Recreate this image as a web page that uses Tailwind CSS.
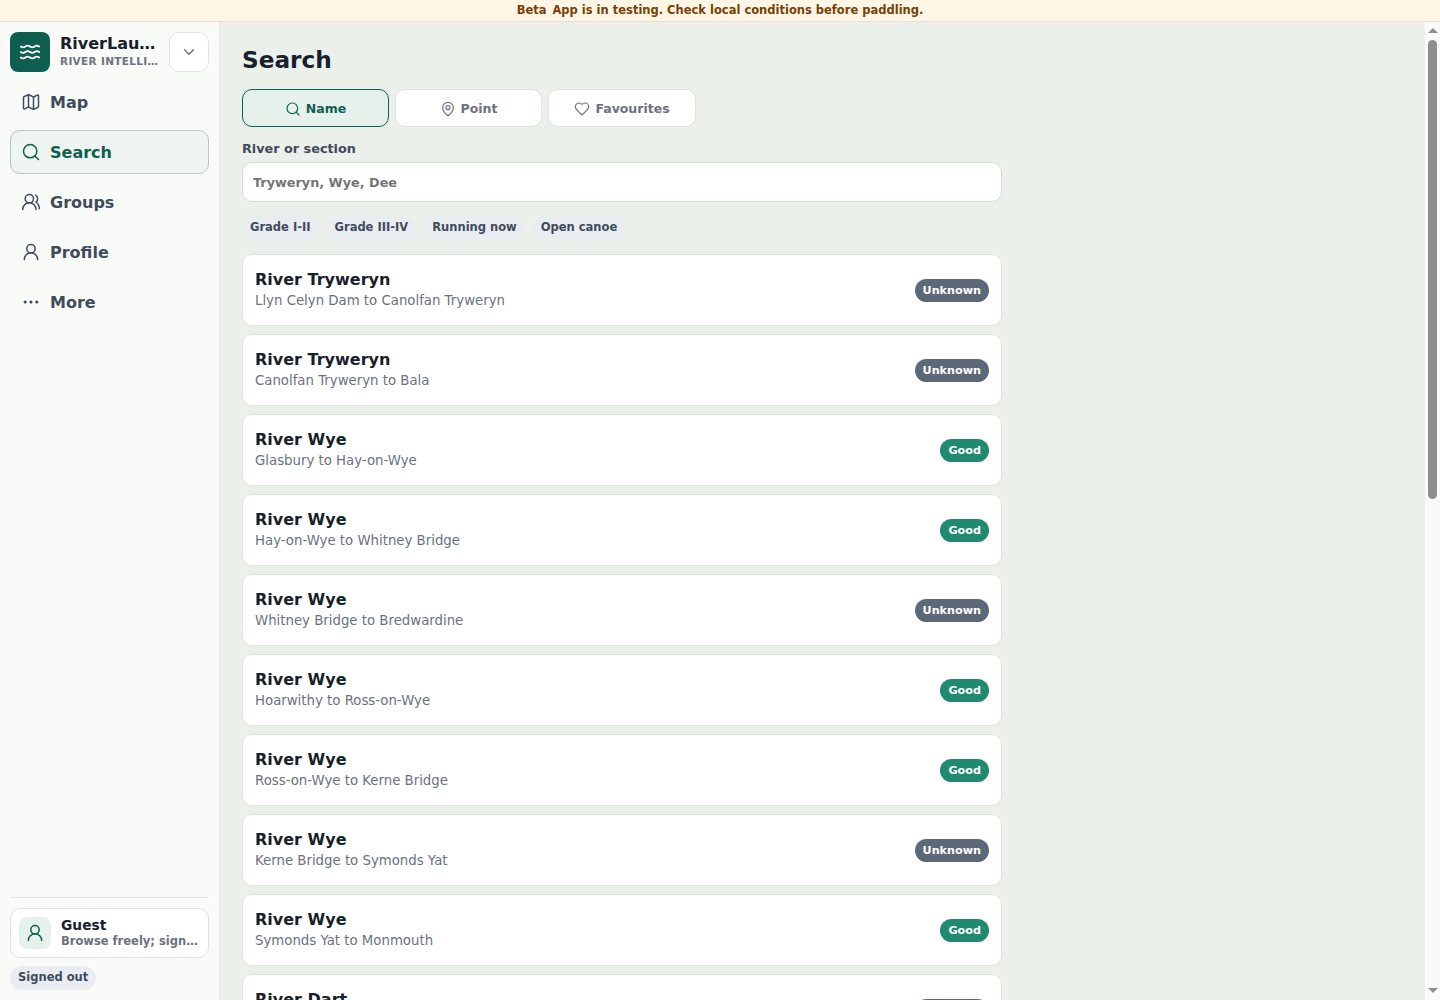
<!DOCTYPE html>
<html lang="en">
<head>
<meta charset="UTF-8">
<title>RiverLaunch - Search</title>
<script src="https://cdn.jsdelivr.net/npm/@tailwindcss/browser@4"></script>
</head>
<body class="h-screen overflow-hidden flex flex-col bg-[#ebf0eb] font-['DejaVu_Sans',sans-serif] text-[#17212b]">

	<!-- Beta banner -->
	<div class="h-[22px] shrink-0 flex items-center justify-center gap-[6px] bg-[#fff6e5] border-b border-[#e8dfd0] text-[11.5px] font-bold text-[#7a3e06]">
		<span>Beta</span>
		<span>App is in testing. Check local conditions before paddling.</span>
	</div>

	<div class="flex-1 min-h-0 flex">
		<!-- Sidebar -->
		<aside class="w-[220px] shrink-0 flex flex-col bg-[#f9fbf8] border-r border-[#dfe4df] px-2.5 pt-2.5 pb-2.5">
			<div class="flex items-center gap-2.5 h-10">
				<div class="w-10 h-10 shrink-0 rounded-lg bg-[#0f5e52] flex items-center justify-center text-white">
					<svg class="w-[22px] h-[22px]" fill="none" stroke="currentColor" stroke-width="2" stroke-linecap="round" stroke-linejoin="round" viewBox="0 0 24 24"><path d="M2 6c.6.5 1.2 1 2.5 1C7 7 7 5 9.5 5c2.6 0 2.4 2 5 2 2.5 0 2.5-2 5-2 1.3 0 1.9.5 2.5 1"/><path d="M2 12c.6.5 1.2 1 2.5 1 2.5 0 2.5-2 5-2 2.6 0 2.4 2 5 2 2.5 0 2.5-2 5-2 1.3 0 1.9.5 2.5 1"/><path d="M2 18c.6.5 1.2 1 2.5 1 2.5 0 2.5-2 5-2 2.6 0 2.4 2 5 2 2.5 0 2.5-2 5-2 1.3 0 1.9.5 2.5 1"/></svg>
				</div>
				<div class="flex-1 min-w-0 pb-0.5">
					<div class="truncate text-base leading-5 font-bold text-[#17212b]">RiverLaunch</div>
					<div class="truncate text-[10.5px] leading-[15px] font-bold text-[#6b7280] tracking-[0.03em]">RIVER INTELLIGENCE</div>
				</div>
				<button class="w-10 h-10 shrink-0 rounded-[10px] bg-white border border-[#dfe4df] flex items-center justify-center text-[#6b7280]">
					<svg class="w-[18px] h-[18px]" fill="none" stroke="currentColor" stroke-width="1.8" stroke-linecap="round" stroke-linejoin="round" viewBox="0 0 24 24"><path d="m6 9 6 6 6-6"/></svg>
				</button>
			</div>

			<nav class="mt-2 flex flex-col gap-1.5">
				<a class="h-11 flex items-center gap-[9px] px-2.5 rounded-[10px] border border-transparent text-base font-bold text-[#3f4b5c]">
					<svg class="w-5 h-5" fill="none" stroke="currentColor" stroke-width="1.8" stroke-linecap="round" stroke-linejoin="round" viewBox="0 0 24 24"><path d="M14.106 5.553a2 2 0 0 0 1.788 0l3.659-1.83A1 1 0 0 1 21 4.619v12.764a1 1 0 0 1-.553.894l-4.553 2.277a2 2 0 0 1-1.788 0l-4.212-2.106a2 2 0 0 0-1.788 0l-3.659 1.83A1 1 0 0 1 3 19.381V6.618a1 1 0 0 1 .553-.894l4.553-2.277a2 2 0 0 1 1.788 0z"/><path d="M15 5.764v15"/><path d="M9 3.236v15"/></svg>
					<span class="mt-0.5">Map</span>
				</a>
				<a class="h-11 flex items-center gap-[9px] px-2.5 rounded-[10px] border border-[#b4c8bf] bg-[#eef4ef] text-base font-bold text-[#0f5e52]">
					<svg class="w-5 h-5" fill="none" stroke="currentColor" stroke-width="1.8" stroke-linecap="round" stroke-linejoin="round" viewBox="0 0 24 24"><circle cx="11" cy="11" r="8"/><path d="m21 21-4.3-4.3"/></svg>
					<span class="mt-0.5">Search</span>
				</a>
				<a class="h-11 flex items-center gap-[9px] px-2.5 rounded-[10px] border border-transparent text-base font-bold text-[#3f4b5c]">
					<svg class="w-5 h-5" fill="none" stroke="currentColor" stroke-width="1.8" stroke-linecap="round" stroke-linejoin="round" viewBox="0 0 24 24"><path d="M18 21a8 8 0 0 0-16 0"/><circle cx="10" cy="8" r="5"/><path d="M22 20c0-3.37-2-6.5-4-8a5 5 0 0 0-.45-8.3"/></svg>
					<span class="mt-0.5">Groups</span>
				</a>
				<a class="h-11 flex items-center gap-[9px] px-2.5 rounded-[10px] border border-transparent text-base font-bold text-[#3f4b5c]">
					<svg class="w-5 h-5" fill="none" stroke="currentColor" stroke-width="1.8" stroke-linecap="round" stroke-linejoin="round" viewBox="0 0 24 24"><circle cx="12" cy="8" r="5"/><path d="M20 21a8 8 0 0 0-16 0"/></svg>
					<span class="mt-0.5">Profile</span>
				</a>
				<a class="h-11 flex items-center gap-[9px] px-2.5 rounded-[10px] border border-transparent text-base font-bold text-[#3f4b5c]">
					<svg class="w-5 h-5" fill="none" stroke="currentColor" stroke-width="1.8" stroke-linecap="round" stroke-linejoin="round" viewBox="0 0 24 24"><circle cx="12" cy="12" r="1"/><circle cx="19" cy="12" r="1"/><circle cx="5" cy="12" r="1"/></svg>
					<span class="mt-0.5">More</span>
				</a>
			</nav>

			<div class="mt-auto border-t border-[#dfe4df] pt-2.5">
				<div class="h-[50px] flex items-center gap-2.5 px-2 rounded-[10px] bg-white border border-[#dfe4df]">
					<div class="w-8 h-8 shrink-0 rounded-lg bg-[#e6f1ec] flex items-center justify-center text-[#0f5e52]">
						<svg class="w-5 h-5" fill="none" stroke="currentColor" stroke-width="1.8" stroke-linecap="round" stroke-linejoin="round" viewBox="0 0 24 24"><circle cx="12" cy="8" r="5"/><path d="M20 21a8 8 0 0 0-16 0"/></svg>
					</div>
					<div class="flex-1 min-w-0">
						<div class="truncate text-[13.8px] leading-[17px] font-bold text-[#17212b]">Guest</div>
						<div class="truncate text-[11.5px] leading-[15px] font-bold text-[#6b7280]">Browse freely; sign in to save</div>
					</div>
				</div>
				<span class="mt-2 inline-flex h-6 items-center px-2 rounded-full bg-[#e9edf1] text-[11.5px] font-bold text-[#3f4b5c]">Signed out</span>
			</div>
		</aside>

		<!-- Main -->
		<main class="flex-1 min-w-0 overflow-hidden px-[22px] pt-[22px]">
			<div class="w-[760px]">
				<h1 class="text-[23.2px] leading-[32px] font-bold text-[#17212b]">Search</h1>

				<div class="mt-[13px] flex gap-1.5">
					<button class="w-[147px] h-[38px] pt-0.5 flex items-center justify-center gap-[5px] rounded-[10px] border border-[#0f5e52] bg-[#e6f1ec] text-[12.5px] font-bold text-[#0f5e52]">
						<svg class="w-4 h-4" fill="none" stroke="currentColor" stroke-width="1.8" stroke-linecap="round" stroke-linejoin="round" viewBox="0 0 24 24"><circle cx="11" cy="11" r="8"/><path d="m21 21-4.3-4.3"/></svg>
						Name
					</button>
					<button class="w-[147px] h-[38px] pt-0.5 flex items-center justify-center gap-[5px] rounded-[10px] border border-[#dfe4df] bg-white text-[12.5px] font-bold text-[#6b7280]">
						<svg class="w-4 h-4" fill="none" stroke="currentColor" stroke-width="1.8" stroke-linecap="round" stroke-linejoin="round" viewBox="0 0 24 24"><path d="M20 10c0 4.993-5.539 10.193-7.399 11.799a1 1 0 0 1-1.202 0C9.539 20.193 4 14.993 4 10a8 8 0 0 1 16 0"/><circle cx="12" cy="10" r="3"/></svg>
						Point
					</button>
					<button class="w-[148px] h-[38px] pt-0.5 flex items-center justify-center gap-[5px] rounded-[10px] border border-[#dfe4df] bg-white text-[12.5px] font-bold text-[#6b7280]">
						<svg class="w-4 h-4" fill="none" stroke="currentColor" stroke-width="1.8" stroke-linecap="round" stroke-linejoin="round" viewBox="0 0 24 24"><path d="M19 14c1.49-1.46 3-3.21 3-5.5A5.5 5.5 0 0 0 16.5 3c-1.76 0-3 .5-4.5 2-1.5-1.5-2.74-2-4.5-2A5.5 5.5 0 0 0 2 8.5c0 2.3 1.5 4.05 3 5.5l7 7Z"/></svg>
						Favourites
					</button>
				</div>

				<label class="block mt-3 text-[12.8px] leading-[20px] font-bold text-[#3f4b5c]">River or section</label>
				<input class="mt-[3px] w-full h-10 px-2.5 rounded-[10px] border border-[#d3dcd6] bg-white text-[12.8px] font-bold placeholder:text-[#757575] outline-none" placeholder="Tryweryn, Wye, Dee">

				<div class="mt-3.5 flex gap-2">
					<span class="h-[23px] flex items-center px-2 rounded-full bg-[#e9edf1] text-[11.5px] font-bold text-[#3f4b5c]">Grade I-II</span>
					<span class="h-[23px] flex items-center px-2 rounded-full bg-[#e9edf1] text-[11.5px] font-bold text-[#3f4b5c]">Grade III-IV</span>
					<span class="h-[23px] flex items-center px-2 rounded-full bg-[#e9edf1] text-[11.5px] font-bold text-[#3f4b5c]">Running now</span>
					<span class="h-[23px] flex items-center px-2 rounded-full bg-[#e9edf1] text-[11.5px] font-bold text-[#3f4b5c]">Open canoe</span>
				</div>

				<div class="mt-[15px] flex flex-col gap-2">
					<div class="h-[72px] shrink-0 flex items-center justify-between gap-3 px-3 rounded-[10px] bg-white border border-[#dfe4df]">
						<div class="min-w-0 pt-px"><div class="text-base leading-5 font-bold">River Tryweryn</div><div class="mt-px text-[13.3px] leading-5 text-[#6b7280]">Llyn Celyn Dam to Canolfan Tryweryn</div></div>
						<span class="h-[23px] pt-0.5 flex items-center px-2 rounded-full bg-[#5c6878] text-[11.2px] font-bold text-white">Unknown</span>
					</div>
					<div class="h-[72px] shrink-0 flex items-center justify-between gap-3 px-3 rounded-[10px] bg-white border border-[#dfe4df]">
						<div class="min-w-0 pt-px"><div class="text-base leading-5 font-bold">River Tryweryn</div><div class="mt-px text-[13.3px] leading-5 text-[#6b7280]">Canolfan Tryweryn to Bala</div></div>
						<span class="h-[23px] pt-0.5 flex items-center px-2 rounded-full bg-[#5c6878] text-[11.2px] font-bold text-white">Unknown</span>
					</div>
					<div class="h-[72px] shrink-0 flex items-center justify-between gap-3 px-3 rounded-[10px] bg-white border border-[#dfe4df]">
						<div class="min-w-0 pt-px"><div class="text-base leading-5 font-bold">River Wye</div><div class="mt-px text-[13.3px] leading-5 text-[#6b7280]">Glasbury to Hay-on-Wye</div></div>
						<span class="h-[23px] pt-0.5 flex items-center px-2 rounded-full bg-[#1f8a70] text-[11.2px] font-bold text-white">Good</span>
					</div>
					<div class="h-[72px] shrink-0 flex items-center justify-between gap-3 px-3 rounded-[10px] bg-white border border-[#dfe4df]">
						<div class="min-w-0 pt-px"><div class="text-base leading-5 font-bold">River Wye</div><div class="mt-px text-[13.3px] leading-5 text-[#6b7280]">Hay-on-Wye to Whitney Bridge</div></div>
						<span class="h-[23px] pt-0.5 flex items-center px-2 rounded-full bg-[#1f8a70] text-[11.2px] font-bold text-white">Good</span>
					</div>
					<div class="h-[72px] shrink-0 flex items-center justify-between gap-3 px-3 rounded-[10px] bg-white border border-[#dfe4df]">
						<div class="min-w-0 pt-px"><div class="text-base leading-5 font-bold">River Wye</div><div class="mt-px text-[13.3px] leading-5 text-[#6b7280]">Whitney Bridge to Bredwardine</div></div>
						<span class="h-[23px] pt-0.5 flex items-center px-2 rounded-full bg-[#5c6878] text-[11.2px] font-bold text-white">Unknown</span>
					</div>
					<div class="h-[72px] shrink-0 flex items-center justify-between gap-3 px-3 rounded-[10px] bg-white border border-[#dfe4df]">
						<div class="min-w-0 pt-px"><div class="text-base leading-5 font-bold">River Wye</div><div class="mt-px text-[13.3px] leading-5 text-[#6b7280]">Hoarwithy to Ross-on-Wye</div></div>
						<span class="h-[23px] pt-0.5 flex items-center px-2 rounded-full bg-[#1f8a70] text-[11.2px] font-bold text-white">Good</span>
					</div>
					<div class="h-[72px] shrink-0 flex items-center justify-between gap-3 px-3 rounded-[10px] bg-white border border-[#dfe4df]">
						<div class="min-w-0 pt-px"><div class="text-base leading-5 font-bold">River Wye</div><div class="mt-px text-[13.3px] leading-5 text-[#6b7280]">Ross-on-Wye to Kerne Bridge</div></div>
						<span class="h-[23px] pt-0.5 flex items-center px-2 rounded-full bg-[#1f8a70] text-[11.2px] font-bold text-white">Good</span>
					</div>
					<div class="h-[72px] shrink-0 flex items-center justify-between gap-3 px-3 rounded-[10px] bg-white border border-[#dfe4df]">
						<div class="min-w-0 pt-px"><div class="text-base leading-5 font-bold">River Wye</div><div class="mt-px text-[13.3px] leading-5 text-[#6b7280]">Kerne Bridge to Symonds Yat</div></div>
						<span class="h-[23px] pt-0.5 flex items-center px-2 rounded-full bg-[#5c6878] text-[11.2px] font-bold text-white">Unknown</span>
					</div>
					<div class="h-[72px] shrink-0 flex items-center justify-between gap-3 px-3 rounded-[10px] bg-white border border-[#dfe4df]">
						<div class="min-w-0 pt-px"><div class="text-base leading-5 font-bold">River Wye</div><div class="mt-px text-[13.3px] leading-5 text-[#6b7280]">Symonds Yat to Monmouth</div></div>
						<span class="h-[23px] pt-0.5 flex items-center px-2 rounded-full bg-[#1f8a70] text-[11.2px] font-bold text-white">Good</span>
					</div>
					<div class="h-[72px] shrink-0 flex items-center justify-between gap-3 px-3 rounded-[10px] bg-white border border-[#dfe4df]">
						<div class="min-w-0 pt-px"><div class="text-base leading-5 font-bold">River Dart</div><div class="mt-px text-[13.3px] leading-5 text-[#6b7280]">Newbridge to Holne Bridge</div></div>
						<span class="h-[23px] pt-0.5 flex items-center px-2 rounded-full bg-[#5c6878] text-[11.2px] font-bold text-white">Unknown</span>
					</div>
				</div>
			</div>
		</main>

		<!-- Scrollbar -->
		<div class="w-[15px] shrink-0 flex flex-col items-center bg-[#fafafa] pt-[6px] pb-[7px]">
			<div class="w-0 h-0 border-x-[5px] border-x-transparent border-b-[5px] border-b-[#8f8f8f]"></div>
			<div class="mt-[7px] w-[9px] h-[459px] rounded-t-full rounded-b-full bg-[#8f8f8f]"></div>
			<div class="mt-auto w-0 h-0 border-x-[5px] border-x-transparent border-t-[5px] border-t-[#8f8f8f]"></div>
		</div>
	</div>
</body>
</html>
